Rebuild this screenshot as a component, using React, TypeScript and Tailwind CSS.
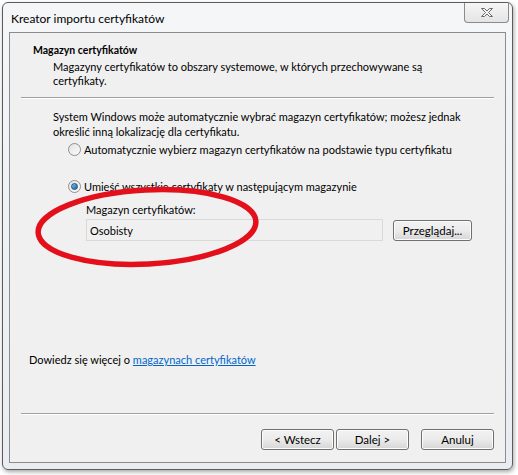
import { useState } from "react";

const font = { fontFamily: 'Lato, "Noto Sans", sans-serif' };

function Radio({ checked }: { checked: boolean }) {
  return (
    <span className="relative flex h-[13px] w-[13px] shrink-0 items-center justify-center rounded-full border border-[#8e8f8f] bg-gradient-to-br from-[#e3e3e3] to-[#fbfbfb]">
      {checked && (
        <span className="h-[7px] w-[7px] rounded-full border border-[#1b4f80] bg-gradient-to-br from-[#7fc3f0] to-[#1d5f9a]" />
      )}
    </span>
  );
}

function WinButton({ label, className = "" }: { label: string; className?: string }) {
  return (
    <button
      className={`flex h-[21px] items-center justify-center rounded-[3px] border border-[#707070] bg-gradient-to-b from-[#f2f2f2] via-[#ebebeb] to-[#d6d6d6] text-[11.5px] text-black shadow-[inset_0_0_0_1px_#fcfcfc] ${className}`}
    >
      {label}
    </button>
  );
}

export default function App() {
  const [choice, setChoice] = useState<"auto" | "manual">("manual");

  return (
    <div className="h-[475px] w-[518px] bg-white text-[11px] leading-[15px] text-black" style={font}>
      <div className="relative ml-[2px] mt-[2px] flex h-[468px] w-[511px] flex-col rounded-[6px] border border-[#5c5c5c] bg-gradient-to-b from-[#f4f6f8] to-[#e9edf1] shadow-[1px_2px_4px_rgba(0,0,0,0.35)]">
        {/* Title bar */}
        <div className="flex h-[29px] items-start justify-between pl-[8px]">
          <span className="mt-[8px] text-[12px] leading-[15px]">Kreator importu certyfikatów</span>
          <div className="mr-[3px] flex h-[20px] w-[45px] items-center justify-center rounded-b-[4px] border border-t-0 border-[#8a8a8a] bg-gradient-to-b from-[#f6f6f6] to-[#e4e4e4]">
            <svg width="14" height="11" viewBox="0 0 14 11">
              <path
                d="M1.5 1.5 L4.5 1.5 L7 4 L9.5 1.5 L12.5 1.5 L8.5 5.5 L12.5 9.5 L9.5 9.5 L7 7 L4.5 9.5 L1.5 9.5 L5.5 5.5 Z"
                fill="#f4f4f4"
                stroke="#6a6a6a"
                strokeWidth="1"
                strokeLinejoin="round"
              />
            </svg>
          </div>
        </div>

        {/* Client area */}
        <div className="mx-[6px] mb-[6px] flex flex-1 flex-col whitespace-nowrap border border-[#8c8c8c] bg-[#f0f0f0]">
          <div className="px-[23px] pt-[10px]">
            <div className="text-[10.5px] font-bold leading-[15px]">Magazyn certyfikatów</div>
            <div className="mt-[2px] pl-[20px] leading-[14px]">
              Magazyny certyfikatów to obszary systemowe, w których przechowywane są
              <br />
              certyfikaty.
            </div>
          </div>
          <div className="mx-[11px] mt-[9px] h-px bg-[#a0a0a0] shadow-[0_1px_0_#ffffff]" />

          <div className="pl-[43px] pr-[20px] pt-[11px]">
            <div className="leading-[15px]">
              System Windows może automatycznie wybrać magazyn certyfikatów; możesz jednak
              <br />
              określić inną lokalizację dla certyfikatu.
            </div>

            <label className="mt-[3px] flex items-center gap-[3px] pl-[15px]" onClick={() => setChoice("auto")}>
              <Radio checked={choice === "auto"} />
              <span>Automatycznie wybierz magazyn certyfikatów na podstawie typu certyfikatu</span>
            </label>

            <label className="mt-[22px] flex items-center gap-[3px] pl-[15px]" onClick={() => setChoice("manual")}>
              <Radio checked={choice === "manual"} />
              <span>Umieść wszystkie certyfikaty w następującym magazynie</span>
            </label>

            <div className="mt-[8px] pl-[33px]">
              <div>Magazyn certyfikatów:</div>
              <div className="mt-[2px] flex items-center gap-[10px]">
                <div className="flex h-[22px] w-[297px] items-center border border-[#d9d9d9] bg-[#f0f0f0] px-[3px]">Osobisty</div>
                <WinButton label="Przeglądaj..." className="w-[79px]" />
              </div>
            </div>
          </div>

          <div className="flex-1" />

          <div className="pl-[19px]">
            Dowiedz się więcej o{" "}
            <a className="text-[#0066cc] underline" href="#">
              magazynach certyfikatów
            </a>
          </div>

          <div className="mx-[11px] mt-[46px] h-px bg-[#a0a0a0] shadow-[0_1px_0_#ffffff]" />

          <div className="flex justify-end pb-[12px] pr-[11px] pt-[15px]">
            <WinButton label="< Wstecz" className="w-[73px]" />
            <WinButton label="Dalej >" className="ml-[2px] w-[73px]" />
            <WinButton label="Anuluj" className="ml-[12px] w-[73px]" />
          </div>
        </div>

        {/* Red annotation ellipse */}
        <svg className="pointer-events-none absolute left-0 top-0" width="511" height="468">
          <ellipse cx="144" cy="224" rx="109" ry="37" fill="none" stroke="#e3101c" strokeWidth="5.5" transform="rotate(-3 144 224)" />
        </svg>
      </div>
    </div>
  );
}
